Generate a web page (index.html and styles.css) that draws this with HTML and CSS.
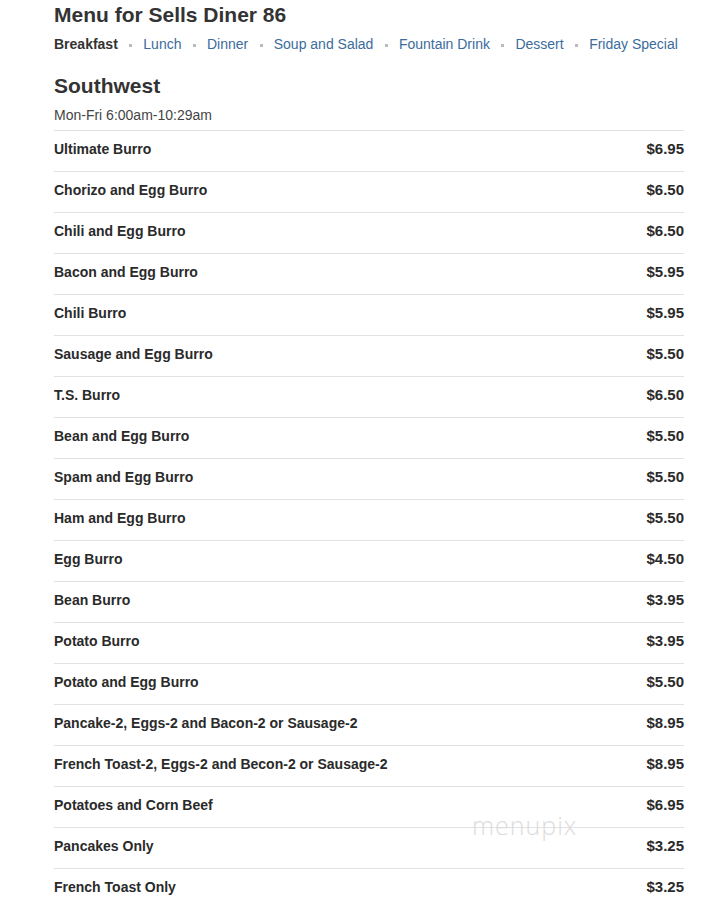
FILE: index.html
```html
<!DOCTYPE html>
<html>
<head>
<meta charset="utf-8">
<link rel="stylesheet" href="styles.css">
</head>
<body>
<div class="page">
  <h1 class="title">Menu for Sells Diner 86</h1>
  <nav class="nav">
    <span class="nav-current">Breakfast</span>
    <span class="sep"></span><a class="nav-link">Lunch</a>
    <span class="sep"></span><a class="nav-link">Dinner</a>
    <span class="sep"></span><a class="nav-link">Soup and Salad</a>
    <span class="sep"></span><a class="nav-link">Fountain Drink</a>
    <span class="sep"></span><a class="nav-link">Dessert</a>
    <span class="sep"></span><a class="nav-link">Friday Special</a>
  </nav>
  <h2 class="section">Southwest</h2>
  <div class="hours">Mon-Fri 6:00am-10:29am</div>
  <ul class="items">
    <li class="item"><span class="name">Ultimate Burro</span><span class="price">$6.95</span></li>
    <li class="item"><span class="name">Chorizo and Egg Burro</span><span class="price">$6.50</span></li>
    <li class="item"><span class="name">Chili and Egg Burro</span><span class="price">$6.50</span></li>
    <li class="item"><span class="name">Bacon and Egg Burro</span><span class="price">$5.95</span></li>
    <li class="item"><span class="name">Chili Burro</span><span class="price">$5.95</span></li>
    <li class="item"><span class="name">Sausage and Egg Burro</span><span class="price">$5.50</span></li>
    <li class="item"><span class="name">T.S. Burro</span><span class="price">$6.50</span></li>
    <li class="item"><span class="name">Bean and Egg Burro</span><span class="price">$5.50</span></li>
    <li class="item"><span class="name">Spam and Egg Burro</span><span class="price">$5.50</span></li>
    <li class="item"><span class="name">Ham and Egg Burro</span><span class="price">$5.50</span></li>
    <li class="item"><span class="name">Egg Burro</span><span class="price">$4.50</span></li>
    <li class="item"><span class="name">Bean Burro</span><span class="price">$3.95</span></li>
    <li class="item"><span class="name">Potato Burro</span><span class="price">$3.95</span></li>
    <li class="item"><span class="name">Potato and Egg Burro</span><span class="price">$5.50</span></li>
    <li class="item"><span class="name">Pancake-2, Eggs-2 and Bacon-2 or Sausage-2</span><span class="price">$8.95</span></li>
    <li class="item"><span class="name">French Toast-2, Eggs-2 and Becon-2 or Sausage-2</span><span class="price">$8.95</span></li>
    <li class="item"><span class="name">Potatoes and Corn Beef</span><span class="price">$6.95</span></li>
    <li class="item"><span class="name">Pancakes Only</span><span class="price">$3.25</span></li>
    <li class="item"><span class="name">French Toast Only</span><span class="price">$3.25</span></li>
  </ul>
  <div class="watermark">menupix</div>
</div>
</body>
</html>
```
FILE: styles.css
```css
html, body {
  margin: 0;
  padding: 0;
  background: #fff;
}
body {
  font-family: "Liberation Sans", Arial, sans-serif;
  color: #333;
}
.page {
  position: relative;
  width: 630px;
  padding: 3px 0 0 54px;
}
.title {
  margin: 0;
  font-size: 21px;
  line-height: 24px;
  font-weight: bold;
  color: #333;
}
.nav {
  margin-top: 7px;
  display: flex;
  align-items: center;
  font-size: 14px;
  line-height: 20px;
}
.nav-current {
  font-weight: bold;
  color: #333;
}
.nav-link {
  color: #3b6c9c;
}
.sep {
  width: 3px;
  height: 3px;
  background: #bbb;
  margin: 2px 11px 0 11.5px;
}
.section {
  margin: 20px 0 0 0;
  font-size: 21px;
  line-height: 24px;
  font-weight: bold;
  color: #333;
}
.hours {
  margin-top: 7px;
  font-size: 14px;
  line-height: 20px;
  color: #444;
}
.items {
  list-style: none;
  margin: 5px 0 0 0;
  padding: 0;
}
.item {
  display: flex;
  justify-content: space-between;
  align-items: baseline;
  border-top: 1px solid #e2e2e2;
  padding: 8px 0 12px 0;
  font-size: 14px;
  line-height: 20px;
  font-weight: bold;
  color: #2a2a2a;
}
.price {
  font-size: 15px;
}
.watermark {
  position: absolute;
  left: 472px;
  top: 808px;
  font-family: "Open Sans", sans-serif;
  font-weight: 300;
  font-size: 25px;
  letter-spacing: 1px;
  color: #dcdcdc;
}
```
